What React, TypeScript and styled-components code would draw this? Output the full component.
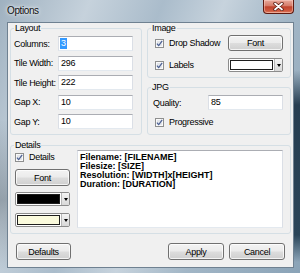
import styled, { createGlobalStyle } from "styled-components";

const GlobalStyle = createGlobalStyle`
  html, body {
    margin: 0;
    padding: 0;
  }
  body {
    width: 300px;
    height: 273px;
    overflow: hidden;
    font-family: "Liberation Sans", Arial, sans-serif;
    font-size: 9px;
    letter-spacing: -0.3px;
    color: #000;
  }
`;

const Window = styled.div`
  width: 300px;
  height: 273px;
  box-sizing: border-box;
  display: flex;
  flex-direction: column;
  background:
    linear-gradient(180deg, transparent 0, transparent 70px, rgba(18, 42, 62, 0.85) 105px, rgba(24, 52, 72, 0.85) 235px, transparent 262px) right top / 6px 100% no-repeat,
    linear-gradient(180deg, transparent 0, transparent 120px, rgba(60, 72, 82, 0.35) 200px, transparent 270px) left top / 7px 100% no-repeat,
    linear-gradient(112deg, #9fb1c0 0%, #c6d2dc 22%, #aabccb 40%, #c7d3dd 55%, #a2b6c6 72%, #8aa3b7 100%);
`;

const TitleBar = styled.div`
  height: 22px;
  flex: none;
  display: flex;
  justify-content: space-between;
  align-items: flex-start;
  padding: 0 6px 0 7px;
  box-sizing: border-box;
`;

const Title = styled.span`
  margin-top: 6px;
  font-size: 10px;
  line-height: 10px;
  letter-spacing: -0.4px;
  color: #111;
  text-shadow: 0 0 3px rgba(255, 255, 255, 0.95), 0 0 6px rgba(255, 255, 255, 0.7);
`;

const CloseButton = styled.div`
  width: 31px;
  height: 14px;
  box-sizing: border-box;
  border: 1px solid #5e1a10;
  border-top: none;
  border-radius: 0 0 4px 4px;
  background: linear-gradient(180deg, #e8aa9c 0%, #d67b68 45%, #c0432d 52%, #cf5a40 85%, #e08a6c 100%);
  box-shadow: inset 0 0 0 1px rgba(255, 220, 210, 0.45);
  display: flex;
  align-items: center;
  justify-content: center;
`;

const Client = styled.div`
  flex: 1;
  margin: 0 6px 5px 7px;
  border: 1px solid #6f8191;
  background: #f0f0f0;
  display: flex;
  flex-direction: column;
  padding: 0 2px 7px 2px;
`;

const TopRow = styled.div`
  display: flex;
  gap: 5px;
`;

const RightColumn = styled.div`
  width: 144px;
  display: flex;
  flex-direction: column;
  gap: 4px;
`;

const Group = styled.fieldset<{ $width?: number }>`
  margin: 0;
  padding: 0;
  min-width: 0;
  box-sizing: border-box;
  width: ${(p) => (p.$width ? `${p.$width}px` : "auto")};
  border: 1px solid #d5dfe5;
  border-radius: 3px;
`;

const Legend = styled.legend`
  margin-left: 3px;
  padding: 0 1px;
  height: 10px;
  line-height: 10px;
`;

const LayoutBody = styled.div`
  display: grid;
  grid-template-columns: 44px 75px;
  grid-auto-rows: 15px;
  row-gap: 4.5px;
  align-items: center;
  padding: 3px 0 5px 3px;
`;

const ImageBody = styled.div`
  display: grid;
  grid-template-columns: 1fr 55px;
  grid-template-rows: 16px 14px;
  row-gap: 7px;
  align-items: center;
  padding: 2px 7px 5px 7px;
`;

const JpgBody = styled.div`
  display: grid;
  grid-template-columns: 1fr 75px;
  grid-template-rows: 15px 10px;
  row-gap: 7px;
  align-items: center;
  padding: 3px 7px 7px 5px;
`;

const DetailsGroup = styled(Group)`
  margin-top: 5px;
`;

const DetailsBody = styled.div`
  display: grid;
  grid-template-columns: 55px 1fr;
  column-gap: 7px;
  padding: 0 7px 5px 4px;
`;

const DetailsLeft = styled.div`
  display: flex;
  flex-direction: column;
  padding-top: 2px;
`;

const Label = styled.span`
  white-space: nowrap;
  line-height: 10px;
`;

const TextBox = styled.div`
  height: 15px;
  box-sizing: border-box;
  background: #fff;
  border: 1px solid #dbdfe6;
  border-top-color: #abadb3;
  border-bottom-color: #e3e9ef;
  padding-left: 2px;
  display: flex;
  align-items: center;
  line-height: 11px;
  white-space: nowrap;
`;

const Selected = styled.span`
  margin-left: -1px;
  padding: 0 1px;
  background: #3399ff;
  color: #fff;
`;

const CheckRow = styled.label<{ $span?: boolean; $indent?: number }>`
  display: flex;
  align-items: center;
  gap: 5px;
  height: 10px;
  line-height: 10px;
  white-space: nowrap;
  grid-column: ${(p) => (p.$span ? "1 / -1" : "auto")};
  margin-left: ${(p) => p.$indent ?? 0}px;
`;

const Button = styled.button<{ $width?: number; $height?: number; $mt?: number }>`
  width: ${(p) => p.$width ?? 55}px;
  height: ${(p) => p.$height ?? 17}px;
  margin-top: ${(p) => p.$mt ?? 0}px;
  padding: 0;
  box-sizing: border-box;
  border: 1px solid #707070;
  border-radius: 3px;
  background: linear-gradient(180deg, #f3f3f3 0%, #ebebeb 48%, #dddddd 52%, #cfcfcf 100%);
  box-shadow: inset 0 0 0 1px rgba(255, 255, 255, 0.75);
  font-family: "Liberation Sans", Arial, sans-serif;
  font-size: 9px;
  letter-spacing: -0.3px;
  line-height: 10px;
  color: #000;
`;

const Combo = styled.div<{ $mt?: number }>`
  width: 55px;
  height: 14px;
  margin-top: ${(p) => p.$mt ?? 0}px;
  box-sizing: border-box;
  display: flex;
  border: 1px solid #8c8c8c;
  border-radius: 2px;
  background: #fff;
  padding: 1px 0 1px 1px;
`;

const Swatch = styled.div<{ $color: string }>`
  flex: 1;
  background: ${(p) => p.$color};
  border: 1px solid #1e1e1e;
`;

const ComboArrow = styled.div`
  width: 7px;
  margin: -1px 0;
  margin-left: 1px;
  border-left: 1px solid #b8b8b8;
  background: linear-gradient(180deg, #f4f4f4 0%, #e6e6e6 50%, #d8d8d8 100%);
  display: flex;
  align-items: center;
  justify-content: center;

  &::after {
    content: "";
    border-left: 2px solid transparent;
    border-right: 2px solid transparent;
    border-top: 3px solid #000;
  }
`;

const TemplateBox = styled.div`
  height: 78px;
  box-sizing: border-box;
  background: #fff;
  border: 1px solid #dbdfe6;
  border-top-color: #abadb3;
  border-bottom-color: #e3e9ef;
  padding: 2px 2px;
  font-weight: bold;
  font-size: 9px;
  letter-spacing: 0;
  line-height: 9px;
  white-space: nowrap;
  overflow: hidden;
`;

const ButtonRow = styled.div`
  display: flex;
  gap: 5px;
  margin-top: 9px;
  padding: 0 6px;
`;

const Spacer = styled.div`
  flex: 1;
`;

const CheckBox = () => (
  <svg width="9" height="9" viewBox="0 0 9 9">
    <rect x="0.5" y="0.5" width="8" height="8" fill="#fafafa" stroke="#8e8f8f" />
    <rect x="2" y="2" width="5" height="5" fill="#e2e5ea" />
    <path d="M1.9 4.6 L3.7 6.6 L7.2 1.9" fill="none" stroke="#4a5f93" strokeWidth="1.2" />
  </svg>
);

const CloseGlyph = () => (
  <svg width="11" height="9" viewBox="0 0 11 9">
    <path d="M2 1.5 L9 7.5 M9 1.5 L2 7.5" stroke="#5a1a10" strokeWidth="3.4" strokeLinecap="round" />
    <path d="M2 1.5 L9 7.5 M9 1.5 L2 7.5" stroke="#fff" strokeWidth="1.8" strokeLinecap="round" />
  </svg>
);

const ColorCombo = ({ color, mt }: { color: string; mt?: number }) => (
  <Combo $mt={mt}>
    <Swatch $color={color} />
    <ComboArrow />
  </Combo>
);

export default function App() {
  return (
    <>
      <GlobalStyle />
      <Window>
        <TitleBar>
          <Title>Options</Title>
          <CloseButton>
            <CloseGlyph />
          </CloseButton>
        </TitleBar>
        <Client>
          <TopRow>
            <Group $width={132}>
              <Legend>Layout</Legend>
              <LayoutBody>
                <Label>Columns:</Label>
                <TextBox>
                  <Selected>3</Selected>
                </TextBox>
                <Label>Tile Width:</Label>
                <TextBox>296</TextBox>
                <Label>Tile Height:</Label>
                <TextBox>222</TextBox>
                <Label>Gap X:</Label>
                <TextBox>10</TextBox>
                <Label>Gap Y:</Label>
                <TextBox>10</TextBox>
              </LayoutBody>
            </Group>
            <RightColumn>
              <Group>
                <Legend>Image</Legend>
                <ImageBody>
                  <CheckRow>
                    <CheckBox />
                    Drop Shadow
                  </CheckRow>
                  <Button $height={16}>Font</Button>
                  <CheckRow>
                    <CheckBox />
                    Labels
                  </CheckRow>
                  <ColorCombo color="#ffffff" />
                </ImageBody>
              </Group>
              <Group>
                <Legend>JPG</Legend>
                <JpgBody>
                  <Label>Quality:</Label>
                  <TextBox>85</TextBox>
                  <CheckRow $span $indent={2}>
                    <CheckBox />
                    Progressive
                  </CheckRow>
                </JpgBody>
              </Group>
            </RightColumn>
          </TopRow>
          <DetailsGroup>
            <Legend>Details</Legend>
            <DetailsBody>
              <DetailsLeft>
                <CheckRow>
                  <CheckBox />
                  Details
                </CheckRow>
                <Button $mt={7}>Font</Button>
                <ColorCombo color="#000000" mt={6} />
                <ColorCombo color="#fafadc" mt={7} />
              </DetailsLeft>
              <TemplateBox>
                Filename: [FILENAME]
                <br />
                Filesize: [SIZE]
                <br />
                Resolution: [WIDTH]x[HEIGHT]
                <br />
                Duration: [DURATION]
              </TemplateBox>
            </DetailsBody>
          </DetailsGroup>
          <ButtonRow>
            <Button>Defaults</Button>
            <Spacer />
            <Button $width={56}>Apply</Button>
            <Button $width={56}>Cancel</Button>
          </ButtonRow>
        </Client>
      </Window>
    </>
  );
}
